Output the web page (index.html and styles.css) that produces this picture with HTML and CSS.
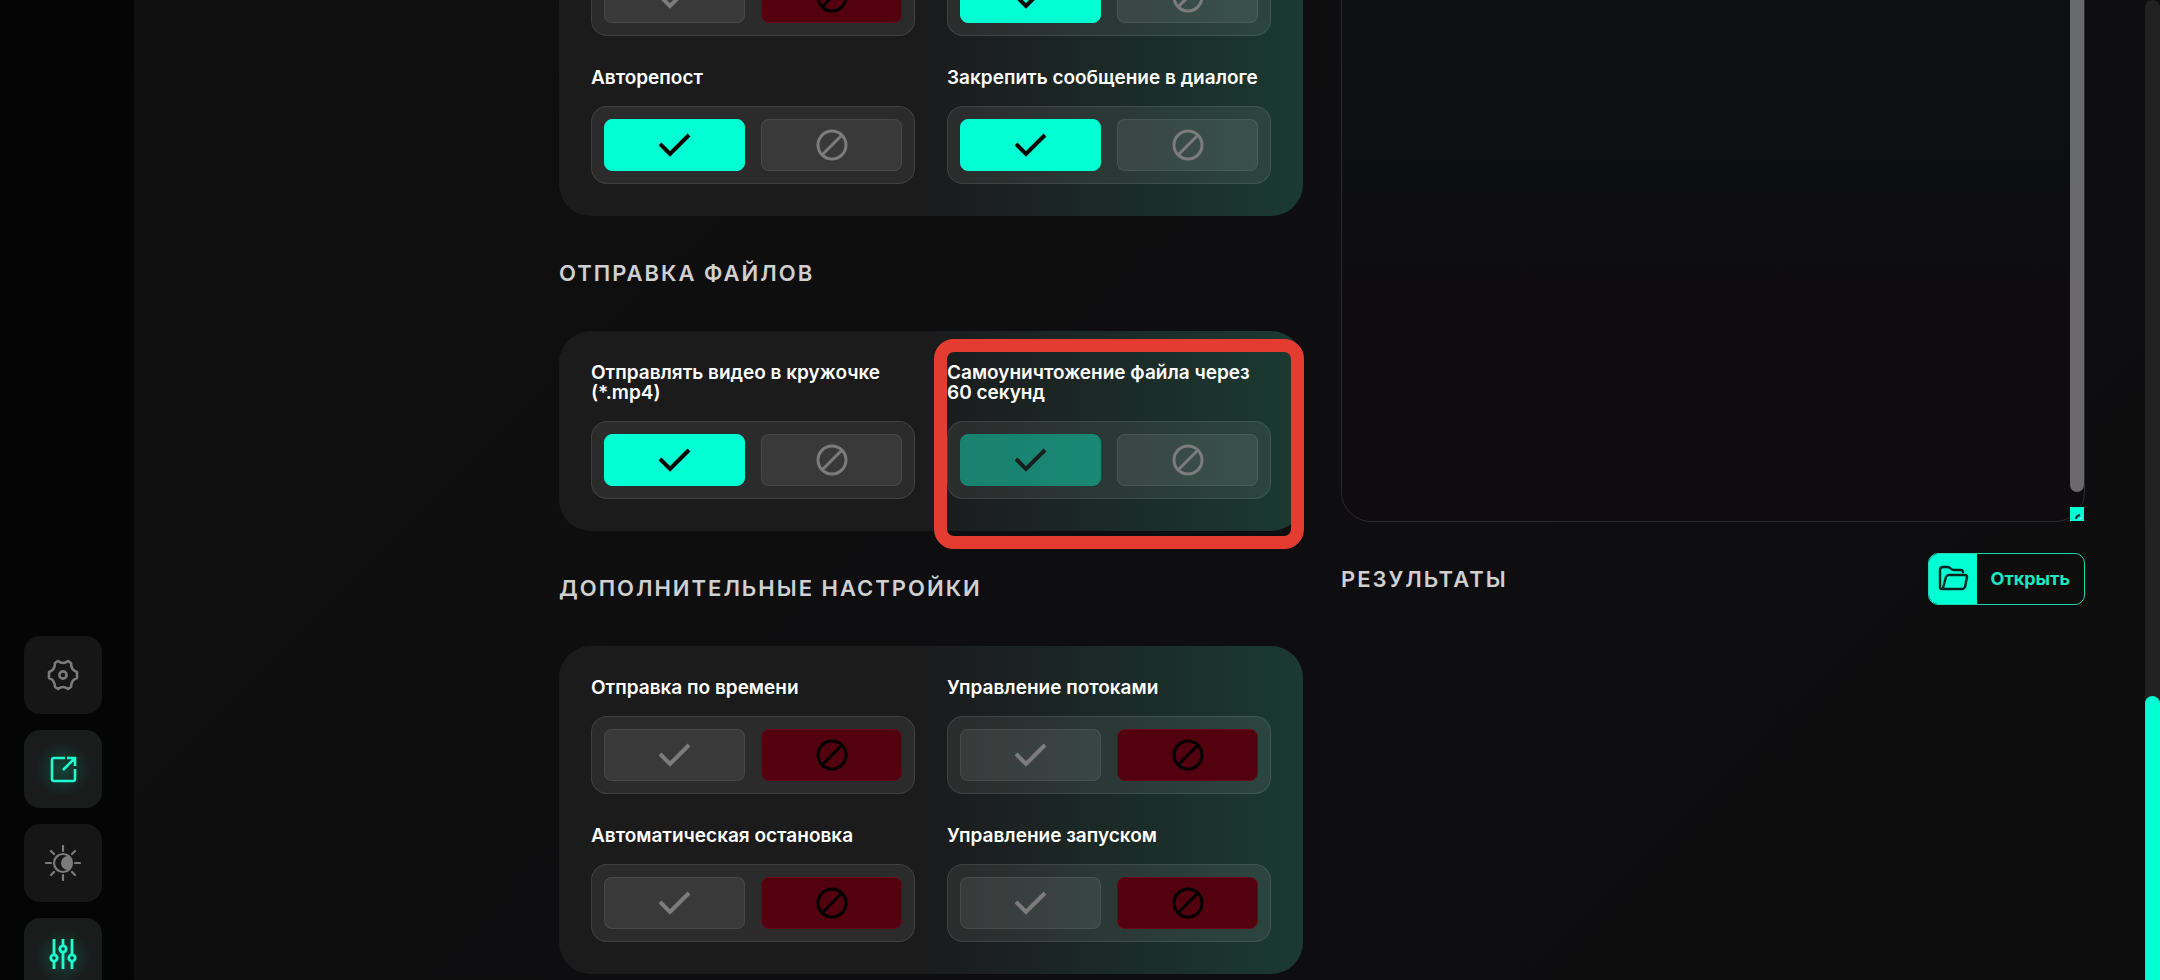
FILE: index.html
```html
<!DOCTYPE html>
<html lang="ru">
<head>
  <meta charset="UTF-8" />
  <meta name="viewport" content="width=device-width, initial-scale=1.0"/>
  <title>Настройки рассылки</title>
  <link rel="stylesheet" href="styles.css">
</head>
<body>
  <svg class="sprite" aria-hidden="true">
    <symbol id="check" viewBox="0 0 32 32"><path d="M1 15l10 10L30 6" fill="none" stroke="currentColor" stroke-width="4"/></symbol>
    <symbol id="ban" viewBox="0 0 32 32"><g fill="none" stroke="currentColor" stroke-width="3"><circle cx="16" cy="16" r="14"/><path d="M6 26L26 6"/></g></symbol>
  </svg>

  <nav class="sidebar">
    <button type="button" class="nav-btn" aria-label="Настройки">
      <svg width="32" height="32" viewBox="0 0 32 32" fill="none" stroke="currentColor" stroke-width="2.6" stroke-linejoin="round"><path d="M8 4L11 2Q16 6 21 2L24 4Q24 11 30 13V19Q24 21 24 28L21 30Q16 26 11 30L8 28Q8 21 2 19V13Q8 11 8 4Z"/><circle cx="16" cy="16" r="3.6"/></svg>
    </button>
    <button type="button" class="nav-btn active" aria-label="Открыть окно">
      <svg width="32" height="32" viewBox="0 0 32 32" fill="none" stroke="currentColor" stroke-width="2.6"><path d="M18 5H7Q5 5 5 7V26Q5 28 7 28H26Q28 28 28 26V16M16 17L27 6M20 5H28V13"/></svg>
    </button>
    <button type="button" class="nav-btn" aria-label="Тема">
      <svg width="36" height="36" viewBox="0 0 36 36" fill="none" stroke="currentColor" stroke-width="2.2" stroke-linecap="round"><circle cx="18" cy="18" r="9"/><path d="M23 11a7 7 0 1 0 0 14a9 9 0 0 0 0-14z" fill="currentColor" stroke="none"/><path d="M18 1v5M18 30v5M1 18h5M30 18h5M6 6l3 3M27 27l3 3M6 30l3-3M27 9l3-3"/></svg>
    </button>
    <button type="button" class="nav-btn active" aria-label="Параметры">
      <svg width="32" height="32" viewBox="0 0 32 32" fill="none" stroke="currentColor" stroke-width="2.8"><path d="M7 1v16M7 24v7M16 1v7M16 15v16M25 1v16M25 24v7"/><circle cx="7" cy="20" r="3.2"/><circle cx="16" cy="11" r="3.2"/><circle cx="25" cy="20" r="3.2"/></svg>
    </button>
  </nav>

  <main class="content">
    <div class="column settings">
      <section class="card">
        <div class="field" role="radiogroup" aria-label="Дополнительно 1">
          <div class="toggle">
            <label class="option"><input type="radio" name="extra1" value="1" aria-label="Да"><svg><use href="#check"/></svg></label>
            <label class="option no"><input type="radio" name="extra1" value="0" aria-label="Нет" checked><svg><use href="#ban"/></svg></label>
          </div>
        </div>
        <div class="field" role="radiogroup" aria-label="Дополнительно 2">
          <div class="toggle">
            <label class="option"><input type="radio" name="extra2" value="1" aria-label="Да" checked><svg><use href="#check"/></svg></label>
            <label class="option no"><input type="radio" name="extra2" value="0" aria-label="Нет"><svg><use href="#ban"/></svg></label>
          </div>
        </div>
        <div class="field" role="radiogroup" aria-labelledby="repost">
          <span class="name" id="repost">Авторепост</span>
          <div class="toggle">
            <label class="option"><input type="radio" name="repost" value="1" aria-label="Да" checked><svg><use href="#check"/></svg></label>
            <label class="option no"><input type="radio" name="repost" value="0" aria-label="Нет"><svg><use href="#ban"/></svg></label>
          </div>
        </div>
        <div class="field" role="radiogroup" aria-labelledby="pin">
          <span class="name" id="pin">Закрепить сообщение в диалоге</span>
          <div class="toggle">
            <label class="option"><input type="radio" name="pin" value="1" aria-label="Да" checked><svg><use href="#check"/></svg></label>
            <label class="option no"><input type="radio" name="pin" value="0" aria-label="Нет"><svg><use href="#ban"/></svg></label>
          </div>
        </div>
      </section>

      <h2 class="title">Отправка файлов</h2>
      <section class="card">
        <div class="field" role="radiogroup" aria-labelledby="video">
          <span class="name" id="video">Отправлять видео в кружочке (*.mp4)</span>
          <div class="toggle">
            <label class="option"><input type="radio" name="video" value="1" aria-label="Да" checked><svg><use href="#check"/></svg></label>
            <label class="option no"><input type="radio" name="video" value="0" aria-label="Нет"><svg><use href="#ban"/></svg></label>
          </div>
        </div>
        <div class="field highlight" role="radiogroup" aria-labelledby="destroy">
          <span class="name" id="destroy">Самоуничтожение файла через 60 секунд</span>
          <div class="toggle">
            <label class="option locked"><input type="radio" name="destroy" value="1" aria-label="Да" checked disabled><svg><use href="#check"/></svg></label>
            <label class="option no"><input type="radio" name="destroy" value="0" aria-label="Нет" disabled><svg><use href="#ban"/></svg></label>
          </div>
        </div>
      </section>

      <h2 class="title">Дополнительные настройки</h2>
      <section class="card">
        <div class="field" role="radiogroup" aria-labelledby="timer">
          <span class="name" id="timer">Отправка по времени</span>
          <div class="toggle">
            <label class="option"><input type="radio" name="timer" value="1" aria-label="Да"><svg><use href="#check"/></svg></label>
            <label class="option no"><input type="radio" name="timer" value="0" aria-label="Нет" checked><svg><use href="#ban"/></svg></label>
          </div>
        </div>
        <div class="field" role="radiogroup" aria-labelledby="threads">
          <span class="name" id="threads">Управление потоками</span>
          <div class="toggle">
            <label class="option"><input type="radio" name="threads" value="1" aria-label="Да"><svg><use href="#check"/></svg></label>
            <label class="option no"><input type="radio" name="threads" value="0" aria-label="Нет" checked><svg><use href="#ban"/></svg></label>
          </div>
        </div>
        <div class="field" role="radiogroup" aria-labelledby="autostop">
          <span class="name" id="autostop">Автоматическая остановка</span>
          <div class="toggle">
            <label class="option"><input type="radio" name="autostop" value="1" aria-label="Да"><svg><use href="#check"/></svg></label>
            <label class="option no"><input type="radio" name="autostop" value="0" aria-label="Нет" checked><svg><use href="#ban"/></svg></label>
          </div>
        </div>
        <div class="field" role="radiogroup" aria-labelledby="launch">
          <span class="name" id="launch">Управление запуском</span>
          <div class="toggle">
            <label class="option"><input type="radio" name="launch" value="1" aria-label="Да"><svg><use href="#check"/></svg></label>
            <label class="option no"><input type="radio" name="launch" value="0" aria-label="Нет" checked><svg><use href="#ban"/></svg></label>
          </div>
        </div>
      </section>
    </div>

    <div class="column output">
      <div class="editor">
        <textarea class="editor-text" aria-label="Текст"></textarea>
        <span class="editor-thumb"></span>
        <svg class="editor-grip" width="14" height="14" viewBox="0 0 14 14"><path d="M0 0H14V14H0z" fill="#00ffd2"/><path d="M6 12Q6 9 10 8" fill="none" stroke="#123" stroke-width="2"/><path d="M9 13l3-3" stroke="#dff" stroke-width="1"/></svg>
      </div>
      <section class="results">
        <h2 class="title">Результаты</h2>
        <button type="button" class="open-btn">
          <span class="open-icon"><svg width="32" height="28" viewBox="0 0 32 28" fill="none" stroke="currentColor" stroke-width="2.4" stroke-linejoin="round" stroke-linecap="round"><path d="M26 7Q26 5 24 5H17Q15 5 13 3Q12 2 10 2H6Q3 2 3 5V22Q3 24 5 24H25Q27 24 28 22L30 12Q30 10 28 10H12Q10 10 9 12L6 23"/></svg></span>
          <span class="open-text">Открыть</span>
        </button>
      </section>
    </div>
  </main>

  <div class="scrollbar"><div class="scrollbar-thumb"></div></div>
</body>
</html>
```

FILE: styles.css
```css
* {
  box-sizing: border-box;
}

body {
  margin: 0;
  height: 100vh;
  display: flex;
  overflow: hidden;
  font-family: Inter, 'Open Sans', sans-serif;
  color: #fff;
  background: linear-gradient(135deg, #101010, #0e0d0f 60%, #0d0d0e);
}

.sprite {
  position: absolute;
  width: 0;
  height: 0;
}

/* Sidebar */
.sidebar {
  flex: 0 0 134px;
  display: flex;
  flex-direction: column;
  justify-content: flex-end;
  gap: 16px;
  padding-left: 24px;
  margin-bottom: -16px;
  background-color: #050505;
}

.nav-btn {
  display: flex;
  flex: 0 0 78px;
  width: 78px;
  align-items: center;
  justify-content: center;
  padding: 0;
  border: none;
  border-radius: 16px;
  background-color: #161616;
  color: #7b7b7b;
  cursor: pointer;
}

.nav-btn:last-child {
  padding-bottom: 6px;
}

.nav-btn.active {
  color: #1effd0;
  background: radial-gradient(circle, #153f36 5%, #191c1b 50%);
}

/* Content */
.content {
  flex: 1;
  min-width: 0;
  display: grid;
  grid-template-columns: 327fr 744fr 744fr;
  grid-template-rows: 100vh;
  column-gap: 38px;
  padding: 0 60px;
}

.column {
  display: flex;
  flex-direction: column;
}

/* The page is scrolled to its end, so the column hangs from the bottom */
.settings {
  grid-column: 2;
  justify-content: flex-end;
  padding-bottom: 6px;
}

.card {
  flex-shrink: 0;
  display: grid;
  grid-template-columns: 1fr 1fr;
  gap: 32px;
  padding: 32px;
  border-radius: 32px;
  background: linear-gradient(90deg, #1b1b1c 50%, #1b3a32);
}

.title {
  display: flex;
  flex-shrink: 0;
  align-items: center;
  height: 115px;
  margin: 0;
  padding-bottom: 2px;
  font-size: 22px;
  font-weight: 600;
  letter-spacing: 2px;
  text-transform: uppercase;
  color: #d0d0d0;
}

.field {
  position: relative;
  display: flex;
  flex-direction: column;
  gap: 18px;
}

.name {
  font-size: 19px;
  font-weight: 600;
  line-height: 20px;
}

/* Red frame around the option */
.highlight::after {
  content: '';
  position: absolute;
  inset: -24px -33px -50px -13px;
  border: 13px solid #e43c31;
  border-radius: 20px;
  pointer-events: none;
}

.toggle {
  display: flex;
  gap: 16px;
  height: 78px;
  padding: 12px;
  border: 1px solid rgba(255, 255, 255, 0.1);
  border-radius: 16px;
  background-color: rgba(255, 255, 255, 0.07);
}

.option {
  position: relative;
  flex: 1;
  display: flex;
  align-items: center;
  justify-content: center;
  color: #7c7c7c;
  cursor: pointer;
}

.option input {
  appearance: none;
  position: absolute;
  inset: 0;
  margin: 0;
  border: 1px solid rgba(255, 255, 255, 0.08);
  border-radius: 8px;
  background-color: rgba(255, 255, 255, 0.07);
}

.option svg {
  position: relative;
  width: 32px;
  height: 32px;
}

.option input:checked {
  background-color: #00ffd2;
  border-color: #00ffd2;
}

.option.no input:checked {
  background-color: #53000f;
  border-color: #66091a;
}

.option input:checked + svg {
  color: #000;
}

.option.locked {
  opacity: 0.4;
}

/* Right column */
.editor {
  position: relative;
  flex: 1;
  margin-top: -40px;
}

.editor-text {
  display: block;
  width: 100%;
  height: 100%;
  resize: none;
  border: 1px solid #2c2b2d;
  border-radius: 30px;
  background: linear-gradient(#0d0f10 30%, #0e0c0f 60%);
  color: #fff;
}

.editor-thumb {
  position: absolute;
  top: 0;
  right: 1px;
  bottom: 30px;
  width: 14px;
  border-radius: 7px;
  background-color: #6a696b;
}

.editor-grip {
  position: absolute;
  right: 1px;
  bottom: 1px;
}

.results {
  display: flex;
  align-items: flex-start;
  justify-content: space-between;
  height: 458px;
}

.open-btn {
  display: flex;
  height: 52px;
  margin-top: 31px;
  padding: 0;
  overflow: hidden;
  border: 1px solid #1ed6b3;
  border-radius: 10px;
  background-color: #0d0d0d;
  color: #1ee6c0;
  font-family: inherit;
  font-size: 18px;
  font-weight: 700;
  cursor: pointer;
}

.open-icon {
  display: flex;
  align-items: center;
  justify-content: center;
  width: 48px;
  height: 100%;
  background-color: #00ffd2;
  color: #06251f;
}

.open-text {
  padding: 0 14px;
  line-height: 50px;
}

/* Page scrollbar */
.scrollbar {
  flex: 0 0 15px;
  display: flex;
  align-items: flex-end;
  border-radius: 8px;
  background-color: #212121;
}

.scrollbar-thumb {
  width: 100%;
  height: 29%;
  border-radius: 8px 8px 0 0;
  background-color: #00ffd2;
}
```
